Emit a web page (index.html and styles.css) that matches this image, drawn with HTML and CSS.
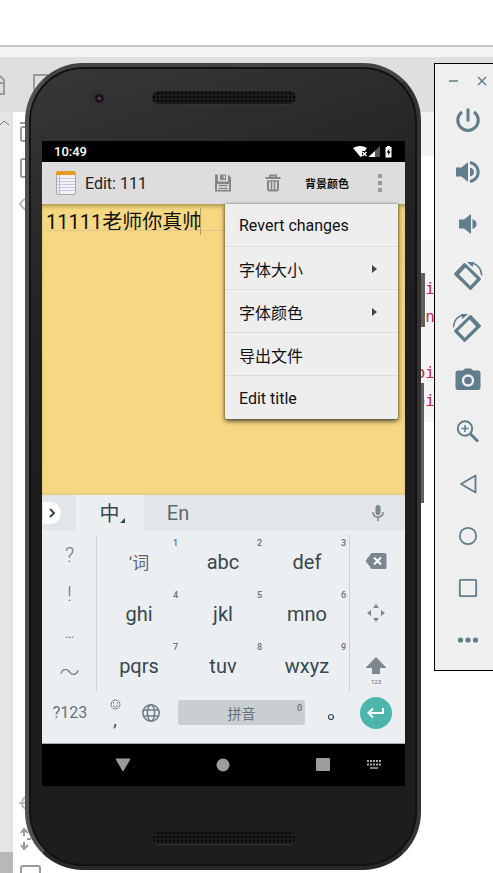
FILE: index.html
```html
<!DOCTYPE html>
<html lang="zh">
<head>
<meta charset="utf-8">
<meta name="viewport" content="width=device-width, initial-scale=1">
<title>Edit: 111</title>
<link rel="stylesheet" href="styles.css">
</head>
<body>
<div class="desktop">
  <div class="ide">
    <div class="ide-top"></div>
    <div class="ide-bar"></div>
    <div class="ide-body">
      <div class="ide-gutter"></div>
      <div class="ide-page">
        <div class="band"></div>
        <div class="code"><code>oi</code><code>on</code><code></code><code>oi</code><code>oi</code></div>
      </div>
    </div>
    <svg class="ide-icons" width="60" height="873" viewBox="0 0 60 873" fill="none" stroke="#999" stroke-width="2">
      <path d="M0 76l4 4v14H0M0 83h4M34 90V75h14" />
      <path d="M0 125l4-4 5 4" stroke="#777" stroke-width="1"/>
      <path d="M20 123h10M30 127h-7q-2 0-2 2v10q0 2 2 2h7M30 159h-7q-2 0-2 2v14q0 2 2 2h7"/>
      <path d="M28 198q-5 1-8 6 3 5 8 7M28 796q-6 2-6 7t6 7M19 803h8" stroke="#bbb"/>
      <path d="M24 829v7m0 6v7M21 833l3-4 4 4M21 845l3 4 4-4M27 839h4" />
      <path d="M21 873v-5q0-2 2-2h15q2 0 2 2v5"/>
    </svg>
  </div>

  <main class="phone">
    <i class="side side-power"></i><i class="side side-volume"></i>
    <div class="bezel bezel-top"><i class="lens"></i><i class="grille"></i></div>
    <section class="screen">
      <header class="status">
        <time>10:49</time>
        <svg width="40" height="13" viewBox="0 0 40 13" fill="#fff">
          <path d="M0 3Q7-1 14 3L12 6H9v5L7.500 12z"/><path d="M9.500 7l4 4m0-4l-4 4" stroke="#fff" stroke-width="1.400"/>
          <path d="M27 1v11H15.500z" fill="#555"/><path d="M22 6v6h-6.500z"/>
          <path d="M34 1h3v1h1.500v10.500h-6V2H34z"/><path d="M36.500 3.500l-3 4h1.700v3l2.500-4H36z" fill="#000"/>
        </svg>
      </header>

      <div class="appbar">
        <svg class="logo" width="22" height="26" viewBox="0 0 22 26">
          <rect x="1.500" y="2.500" width="19" height="22" rx="1.500" fill="#f4f2f5" stroke="#a9a6a6"/>
          <path d="M1 5V3q0-2 2-2h16q2 0 2 2v2z" fill="#e49b22"/>
          <path d="M2 8.500h18M2 11.500h18M2 14.500h18M2 17.500h18M2 20.500h18" stroke="#c9c8e6"/>
          <path d="M4.500 5v19" stroke="#edaaa5"/>
        </svg>
        <h1>Edit: 111</h1>
        <button class="act" aria-label="Save"><svg width="18" height="18" viewBox="0 0 18 18"><path fill="#868686" fill-rule="evenodd" d="M1 .5h3v7h10v-7l3 3V17.500H1zM3 10v6h12v-6z"/><path d="M4.500 11.500h9M4.500 14.500h9" stroke="#868686" stroke-width="1.300"/><path d="M6 .5h6V6H6zm3.500 1v3h1.500v-3z" fill="#868686" fill-rule="evenodd"/></svg></button>
        <button class="act" aria-label="Delete"><svg width="18" height="18" viewBox="0 0 18 18" fill="none" stroke="#868686"><path d="M1.500 4h15M6 3V1.500h6V3" stroke-width="2"/><path d="M4 7v8q0 1.500 1.500 1.500h7q1.500 0 1.500-1.500V7" stroke-width="2"/><path d="M3 7h12" stroke-width="1.500"/><path d="M7.500 7v9m3-9v9" stroke-width="1.500"/></svg></button>
        <button class="act act-text">背景颜色</button>
        <button class="act act-more" aria-label="More options"><svg width="6" height="18" viewBox="0 0 6 18" fill="#999"><path d="M1 0h4v4H1zM1 7h4v4H1zM1 14h4v4H1z"/></svg></button>
      </div>

      <div class="editor">
        <textarea aria-label="Note" spellcheck="false">11111老师你真帅</textarea>
        <i class="rule"></i><i class="caret"></i>
        <nav class="menu">
          <button>Revert changes</button>
          <button class="sub">字体大小</button>
          <button class="sub">字体颜色</button>
          <button>导出文件</button>
          <button>Edit title</button>
        </nav>
      </div>

      <section class="keyboard">
        <div class="tabs">
          <button class="expand" aria-label="Expand"><svg width="18" height="22" viewBox="0 0 18 22"><path d="M7 7l4 4-4 4" fill="none" stroke="#37474f" stroke-width="2"/></svg></button>
          <button class="tab tab-on">中<svg width="5" height="5" viewBox="0 0 5 5"><path d="M5 0v5H0z" fill="#37474f"/></svg></button>
          <button class="tab">En</button>
          <button class="mic" aria-label="Voice input"><svg width="14" height="18" viewBox="0 0 14 18"><rect x="4.500" y="1" width="5" height="10" rx="2.500" fill="#7d888c"/><path d="M2 8q0 5 5 5t5-5M7 13v4" fill="none" stroke="#7d888c" stroke-width="1.500"/></svg></button>
        </div>
        <div class="keys">
          <div class="marks"><button>?</button><button>!</button><button class="dots">…</button><button>～</button></div>
          <div class="letters">
            <button class="han">‘词<sup>1</sup></button><button>abc<sup>2</sup></button><button>def<sup>3</sup></button>
            <button>ghi<sup>4</sup></button><button>jkl<sup>5</sup></button><button>mno<sup>6</sup></button>
            <button>pqrs<sup>7</sup></button><button>tuv<sup>8</sup></button><button>wxyz<sup>9</sup></button>
          </div>
          <div class="tools">
            <button aria-label="Backspace"><svg width="22" height="16" viewBox="0 0 22 16"><path d="M6.500 0H20q1.500 0 1.500 1.500v13Q21.500 16 20 16H6.500L.5 8z" fill="#7b878b"/><path d="M9 4.500l7 7m0-7l-7 7" stroke="#fff" stroke-width="2"/></svg></button>
            <button aria-label="Move cursor"><svg width="18" height="18" viewBox="0 0 18 18" fill="#7b878b"><path d="M9 0l3 4H6zM9 18l3-4H6zM0 9l4-3v6zM18 9l-4-3v6z"/></svg></button>
            <button class="shift"><svg width="22" height="17" viewBox="0 0 22 17"><path d="M11 0l10.500 11H15v6H7v-6H.5z" fill="#7b878b"/></svg>123</button>
          </div>
        </div>
        <div class="bottom">
          <button class="sym">?123</button>
          <button class="comma"><svg width="11" height="11" viewBox="0 0 11 11" fill="none" stroke="#747f84"><circle cx="5.500" cy="5.500" r="4.500"/><path d="M3 6.500q2.500 3 5 0M3.500 3v1.500m4-1.500v1.500"/></svg>,</button>
          <button class="globe" aria-label="Language"><svg width="20" height="20" viewBox="0 0 20 20" fill="none" stroke="#717d82" stroke-width="1.600"><circle cx="10" cy="10" r="8.200"/><ellipse cx="10" cy="10" rx="3.600" ry="8.200"/><path d="M2.500 7h15m-15 6h15"/></svg></button>
          <button class="space">拼音<sup>0</sup></button>
          <button class="stop" aria-label="。"><svg width="8" height="8" viewBox="0 0 8 8"><circle cx="4" cy="4" r="2.500" fill="none" stroke="#37474f" stroke-width="1.200"/></svg></button>
          <button class="enter" aria-label="Enter"><svg width="18" height="12" viewBox="0 0 18 12"><path d="M16 1v5H2M6 1.500L1.500 6 6 10.500" fill="none" stroke="#fff" stroke-width="2"/></svg></button>
        </div>
      </section>

      <nav class="nav">
        <span></span>
        <button aria-label="Back"><svg width="16" height="14" viewBox="0 0 16 14"><path d="M1 1h14L8 13z" fill="#9c9c9c" stroke="#9c9c9c" stroke-linejoin="round"/></svg></button>
        <button aria-label="Home"><svg width="14" height="14" viewBox="0 0 14 14"><circle cx="7" cy="7" r="6.500" fill="#9c9c9c"/></svg></button>
        <button aria-label="Overview"><svg width="14" height="14" viewBox="0 0 14 14"><rect width="14" height="13" rx="1" fill="#9c9c9c"/></svg></button>
        <button class="ime" aria-label="Switch keyboard"><svg width="14" height="10" viewBox="0 0 14 10" stroke="#aaa" fill="none"><path d="M0 1h14M0 4.500h14" stroke-width="2" stroke-dasharray="2 1"/><path d="M3 8h8" stroke-width="1.500"/></svg></button>
      </nav>
    </section>
    <div class="bezel bezel-bottom"><i class="grille"></i></div>
  </main>

  <aside class="toolbar">
    <div class="window-buttons">
      <button aria-label="Minimize"><svg width="10" height="10" viewBox="0 0 10 10"><path d="M1 5h9"/></svg></button>
      <button aria-label="Close"><svg width="10" height="10" viewBox="0 0 10 10"><path d="M1 1l8 8m0-8L1 9"/></svg></button>
    </div>
    <button aria-label="Power"><svg width="28" height="28" viewBox="0 0 28 28" fill="none" stroke="#607d8b" stroke-width="3"><path d="M14 2.500v13M8 6a10.200 10.200 0 1 0 12 0"/></svg></button>
    <button aria-label="Volume up"><svg width="28" height="28" viewBox="0 0 28 28" fill="#607d8b"><path d="M2 9.500h5.500L14 4v20l-6.500-5.500H2zM16 9.500q4 1 4 4.500t-4 4.500z"/><path d="M16 4.500a9.600 9.600 0 0 1 0 19" fill="none" stroke="#607d8b" stroke-width="3"/></svg></button>
    <button aria-label="Volume down"><svg width="28" height="28" viewBox="0 0 28 28" fill="#607d8b"><path d="M5 9.500h5L17 4v20l-7-5.500H5zM18.500 9q4 1.500 4 5t-4 5z"/></svg></button>
    <button aria-label="Rotate left"><svg width="30" height="30" viewBox="0 0 30 30"><g id="rotate"><path fill="#607d8b" fill-rule="evenodd" d="M10.500 2.500q1-1 2 0L27.500 17q1 1 0 2l-9 9.500q-1 1-2 0L1.500 14q-1-1 0-2zM12.500 6.500L6 13.500l11.500 11.500 6.500-7z"/><path d="M11 5l-7 7.500M25.500 18.500l-7 7" stroke="#607d8b" stroke-width="2.500"/><path d="M16 1.600q11.500 1 12.800 12.900" fill="none" stroke="#607d8b" stroke-width="1.500"/><path d="M14 1h7l-1.500 5z" fill="#607d8b"/></g></svg></button>
    <button aria-label="Rotate right"><svg width="30" height="30" viewBox="0 0 30 30"><use href="#rotate" transform="matrix(-1 0 0 1 29 0)"/></svg></button>
    <button aria-label="Screenshot"><svg width="28" height="28" viewBox="0 0 28 28"><path fill="#607d8b" d="M9 4.500l2-2h6l2 2h5q2.500 0 2.500 2.500v14.500q0 2.500-2.500 2.500H4q-2.500 0-2.500-2.500V7q0-2.500 2.500-2.500z"/><circle cx="14" cy="14.500" r="5" fill="#607d8b" stroke="#efefef" stroke-width="2.400"/></svg></button>
    <button aria-label="Zoom"><svg width="28" height="28" viewBox="0 0 28 28" fill="none" stroke="#607d8b"><circle cx="11" cy="10.500" r="7.200" stroke-width="2"/><path d="M7.500 10.500h7M11 7v7" stroke-width="1.500"/><path d="M16 15.500l8 8" stroke-width="3"/></svg></button>
    <button aria-label="Back"><svg width="28" height="28" viewBox="0 0 28 28" fill="none" stroke="#607d8b" stroke-width="1.800" stroke-linejoin="round"><path d="M21.500 5.500v17L7 14z"/></svg></button>
    <button aria-label="Home"><svg width="28" height="28" viewBox="0 0 28 28" fill="none" stroke="#607d8b" stroke-width="1.800"><circle cx="14" cy="14" r="8.200"/></svg></button>
    <button aria-label="Overview"><svg width="28" height="28" viewBox="0 0 28 28" fill="none" stroke="#607d8b" stroke-width="1.800"><rect x="5.800" y="5.800" width="16.400" height="16.400" rx="1"/></svg></button>
    <button aria-label="More"><svg width="28" height="28" viewBox="0 0 28 28" fill="#607d8b"><circle cx="6.500" cy="14" r="2.600"/><circle cx="14" cy="14" r="2.600"/><circle cx="21.500" cy="14" r="2.600"/></svg></button>
  </aside>
</div>
</body>
</html>
```
FILE: styles.css
```css
* { box-sizing: border-box; }
body {
  margin: 0;
  background: #fff;
  font-family: Roboto, "Noto Sans CJK SC", sans-serif;
  font-size: 16px;
}
button {
  display: flex;
  align-items: center;
  justify-content: center;
  padding: 0;
  border: 0;
  background: none;
  color: inherit;
  font: inherit;
}
svg { display: block; flex: none; }

.desktop {
  position: relative;
  display: flex;
  align-items: flex-start;
  gap: 13px;
  min-height: 100vh;
  padding: 63px 0 0 25px;
  overflow: hidden;
}

/* window behind the emulator */
.ide {
  position: absolute;
  inset: 0;
  display: flex;
  flex-direction: column;
}
.ide-top {
  height: 57px;
  background: linear-gradient(#fff 45px, #c8c8c8 45px, #c8c8c8 47px, #f3f3f3 47px);
}
.ide-bar { height: 55px; background: #dfdfdf; }
.ide-body { flex: 1; display: flex; }
.ide-gutter {
  width: 13px;
  background: linear-gradient(to top, #b8b8b8 21px, #e5e5e5 21px);
}
.ide-page { flex: 1; }
.band { height: 44px; margin-left: 120px; background: #f2f2f2; }
.code {
  display: flex;
  flex-direction: column;
  align-items: flex-end;
  margin: 84px 0 0 120px;
  padding: 35px 58px 7px 0;
  background: #f5f5f5;
  color: #c7254e;
}
.code code {
  height: 28px;
  font: 16px/28px "DejaVu Sans Mono", monospace;
}
.ide-icons { position: absolute; left: 0; top: 0; }

/* phone */
.phone {
  position: relative;
  flex: 1;
  min-width: 0;
  padding: 0 12px 0 13px;
  border: 4px solid;
  border-color: #444 #353333 #282828 #505050;
  border-radius: 58px;
  background: linear-gradient(160deg, #383839, #242424 25%, #1d1d1d 45%);
  box-shadow: inset 0 0 0 2px #121212;
}
.side {
  position: absolute;
  left: 100%;
  margin-left: 4px;
  background: #625f5f;
}
.side-power { top: 206px; width: 4px; height: 54px; }
.side-volume { top: 316px; width: 3px; height: 120px; }
.bezel { position: relative; display: flex; justify-content: center; }
.bezel-top { height: 74px; padding-top: 24px; }
.bezel-bottom { height: 80px; padding-top: 45px; }
.grille {
  width: 144px;
  height: 13px;
  border-radius: 7px;
  background: radial-gradient(circle, #080808 1px, #1b1b1b 1px) 0 0 / 4px 4px;
  box-shadow: 0 1px 0 #343434;
}
.lens {
  position: absolute;
  left: 49px;
  top: 23px;
  width: 14px;
  height: 14px;
  border-radius: 50%;
  background: radial-gradient(circle at 60% 60%, #70405f 1px, #18151c 2px, #18151c 4px, #303031 5px);
}
.screen { background: #ebeff2; }

.status {
  display: flex;
  align-items: center;
  justify-content: space-between;
  height: 21px;
  padding: 0 12px;
  background: #000;
  color: #fff;
  font-size: 13px;
  font-weight: 500;
}

.appbar {
  position: relative;
  display: flex;
  align-items: center;
  height: 42px;
  padding: 0 5px 0 13px;
  background: #ddd;
}
.appbar h1 {
  flex: 1;
  margin: 0 0 0 8px;
  color: #222;
  font-size: 16px;
  font-weight: 400;
}
.act { width: 50px; height: 42px; }
.act-text {
  width: 58px;
  color: #111;
  font-size: 11px;
  font-weight: 700;
}
.act-more { width: 40px; margin-left: 4px; }

.editor {
  position: relative;
  height: 291px;
  background: #f6d782;
  box-shadow: inset 0 4px 4px -2px #a98f4b, inset 0 -2px 1px #ead08d;
}
.editor textarea {
  display: block;
  width: 100%;
  height: 100%;
  padding: 5px 4px;
  border: 0;
  outline: 0;
  resize: none;
  background: none;
  color: #111;
  font: 20px/26px Roboto, "Noto Sans CJK SC", sans-serif;
}
.rule {
  position: absolute;
  left: 4px;
  right: 4px;
  top: 26px;
  height: 1px;
  background: #e2c48c;
}
.caret {
  position: absolute;
  left: 158px;
  top: 4px;
  width: 1px;
  height: 27px;
  background: #b79f63;
}
.menu {
  position: absolute;
  top: 0;
  right: 7px;
  width: 173px;
  border-radius: 0 0 2px 2px;
  background: #eee;
  box-shadow: 0 2px 5px rgba(0, 0, 0, .7), 0 0 2px rgba(0, 0, 0, .4);
}
.menu button {
  justify-content: space-between;
  width: 100%;
  height: 43px;
  padding: 1px 21px 0 14px;
  border-bottom: 1px solid #dcdcdc;
  color: #111;
}
.menu button:last-child { border-bottom: 0; }
.menu .sub::after {
  content: "";
  border: 4px solid transparent;
  border-left: 5px solid #444;
  border-right: 0;
}

/* keyboard */
.keyboard { color: #37474f; border-bottom: 1px solid #aaa; }
.tabs {
  display: flex;
  align-items: center;
  height: 35px;
  background: #e2e6e9;
}
.expand {
  margin: 0 15px 0 1px;
  border-radius: 0 11px 11px 0;
  background: #fff;
}
.tab { width: 68px; height: 35px; font-size: 20px; color: #5b686e; }
.tab-on { padding-left: 4px; background: #ebeff2; color: #37474f; }
.tab-on svg { margin-top: 16px; }
.mic { margin: 0 20px 0 auto; }
.keys {
  display: grid;
  grid-template-columns: 55px 1fr 56px;
  height: 161px;
  padding-top: 5px;
}
.marks, .tools { display: grid; grid-auto-rows: 1fr; }
.marks { color: #6a777c; font-size: 20px; font-weight: 300; }
.marks .dots { font-size: 14px; font-weight: 400; }
.tools { padding-right: 2px; }
.letters {
  display: grid;
  grid-template-columns: repeat(3, 1fr);
  grid-auto-rows: 1fr;
  margin: 0 -1px;
  border: solid #ccd1d4;
  border-width: 0 1px;
}
.letters button, .space { position: relative; font-size: 20px; }
.letters button { padding-top: 2px; }
.letters .han { padding-top: 0; font-size: 17px; color: #5b686e; }
sup {
  position: absolute;
  top: 3px;
  right: 3px;
  color: #667278;
  font-size: 9px;
  font-weight: 500;
  line-height: 10px;
}
.shift {
  flex-direction: column;
  gap: 4px;
  padding-top: 12px;
  color: #5b686e;
  font-size: 6px;
  line-height: 8px;
}
.bottom {
  display: flex;
  align-items: center;
  height: 47px;
  margin-bottom: 5px;
  padding: 0 13px 4px 9px;
  color: #667278;
}
.sym { width: 38px; }
.comma {
  flex-direction: column;
  gap: 3px;
  width: 52px;
  color: #37474f;
  font-size: 18px;
  line-height: 14px;
}
.globe { width: 20px; margin-right: 17px; }
.space {
  flex: 1;
  height: 25px;
  border-radius: 3px;
  background: #c9ced1;
  font-size: 14px;
}
.stop { width: 55px; padding: 9px 3px 0 0; }
.enter {
  width: 32px;
  height: 32px;
  border-radius: 50%;
  background: #4db6ac;
}

.nav {
  position: relative;
  display: grid;
  grid-template-columns: 31px repeat(3, 100px) 1fr;
  height: 42px;
  background: #000;
}
.nav .ime { justify-content: flex-start; margin-left: -6px; }

/* emulator controls */
.toolbar {
  position: relative;
  display: flex;
  flex-direction: column;
  width: 59px;
  height: 608px;
  padding-left: 8px;
  border: solid #000;
  border-width: 1px 0 1px 1px;
  background: #efefef;
}
.toolbar > button { width: 50px; height: 52px; }
.window-buttons {
  display: flex;
  gap: 19px;
  height: 30px;
  padding: 4px 0 0 5px;
  fill: none;
  stroke: #607d8b;
  stroke-width: 1.500;
}
```
